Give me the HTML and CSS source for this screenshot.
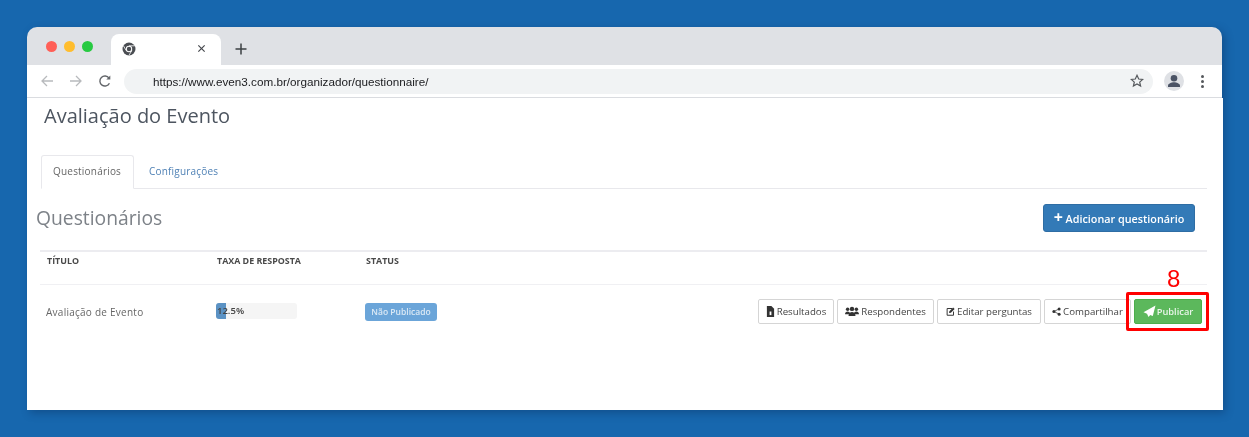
FILE: index.html
```html
<!DOCTYPE html>
<html lang="pt">
<head>
<meta charset="utf-8">
<title>Avaliação do Evento</title>
<link rel="stylesheet" href="styles.css">
</head>
<body>
<div class="window">
  <div class="tabstrip">
    <div class="lights"><span class="light red"></span><span class="light yellow"></span><span class="light green"></span></div>
    <div class="tab">
      <svg class="favicon" viewBox="0 0 14 14"><circle cx="7" cy="7" r="6.5" fill="#4a4d52"/><circle cx="7" cy="7" r="3.2" fill="#fff"/><circle cx="7" cy="7" r="2.2" fill="#4a4d52"/><path d="M7 3.8h5.6M4.2 8.6 1.6 4M9.8 8.6 7 13.2" stroke="#fff" stroke-width=".8" fill="none"/></svg>
      <svg class="close" viewBox="0 0 10 10"><path d="M1.5 1.5l7 7M8.5 1.5l-7 7" stroke="#45484d" stroke-width="1.3"/></svg>
    </div>
    <svg class="newtab" viewBox="0 0 12 12"><path d="M6 .5v11M.5 6h11" stroke="#3c4043" stroke-width="1.5"/></svg>
  </div>
  <div class="toolbar">
    <svg class="nav" viewBox="0 0 14 14"><path d="M13 7H2M7 2 2 7l5 5" stroke="#b8babd" stroke-width="1.3" fill="none"/></svg>
    <svg class="nav" viewBox="0 0 14 14"><path d="M1 7h11M7 2l5 5-5 5" stroke="#b8babd" stroke-width="1.3" fill="none"/></svg>
    <svg class="nav" viewBox="0 0 14 14"><path d="M11.4 9.2A5 5 0 1 1 11 4.2" stroke="#63666a" stroke-width="1.4" fill="none"/><path d="M12.3 1.6v4h-4z" fill="#63666a"/></svg>
    <div class="omnibox">
      <span class="url">https://www.even3.com.br/organizador/questionnaire/</span>
      <svg class="star" viewBox="0 0 14 14"><path d="M7 1.3 8.7 5l4 .4-3 2.7.9 4L7 10l-3.600 2.100.9-4-3-2.700 4-.4z" stroke="#55585c" stroke-width="1.200" fill="none"/></svg>
    </div>
    <div class="avatar"><svg viewBox="0 0 20 20"><circle cx="10" cy="7.200" r="3.300" fill="#4b5365"/><path d="M4 16v-1.500c0-2 3.500-3.300 6-3.300s6 1.300 6 3.300V16z" fill="#4b5365"/></svg></div>
    <div class="menu"><span></span><span></span><span></span></div>
  </div>
  <main class="page">
    <h1 class="title">Avaliação do Evento</h1>
    <nav class="tabs">
      <a class="navtab active">Questionários</a>
      <a class="navtab">Configurações</a>
    </nav>
    <div class="heading">
      <h2 class="subtitle">Questionários</h2>
      <button class="add"><span class="plus">+</span> Adicionar questionário</button>
    </div>
    <div class="table">
      <div class="thead">
        <span class="col-title">TÍTULO</span>
        <span class="col-rate">TAXA DE RESPOSTA</span>
        <span class="col-status">STATUS</span>
      </div>
      <div class="row">
        <span class="col-title name">Avaliação de Evento</span>
        <span class="col-rate"><span class="progress"><span class="bar"></span><span class="pct">12.5%</span></span></span>
        <span class="col-status"><span class="label">Não Publicado</span></span>
        <div class="actions">
          <button class="btn b1"><svg viewBox="0 0 10 12"><path d="M1 0h5l3 3v9H1z" fill="#333"/><path d="M4 6h2v4H4z" fill="#fff"/></svg>Resultados</button>
          <button class="btn b2"><svg class="wide" viewBox="0 0 16 12"><circle cx="8" cy="3" r="2.500" fill="#333"/><circle cx="3" cy="3.500" r="2" fill="#333"/><circle cx="13" cy="3.500" r="2" fill="#333"/><path d="M0 9c0-2 1.500-3 3-3s3 1 3 3zM10 9c0-2 1.500-3 3-3s3 1 3 3zM4 11c0-3 2-4.500 4-4.500s4 1.500 4 4.500z" fill="#333"/></svg>Respondentes</button>
          <button class="btn b3"><svg viewBox="0 0 12 12"><path d="M8 2H1.500v9h8.500V6" stroke="#333" stroke-width="1.300" fill="none"/><path d="M4.500 5.500 9.500.5l2 2-5 5-2.500.5z" fill="#333"/></svg>Editar perguntas</button>
          <button class="btn b4"><svg viewBox="0 0 12 12"><circle cx="2.500" cy="6" r="2" fill="#333"/><circle cx="9.500" cy="2.500" r="2" fill="#333"/><circle cx="9.500" cy="9.500" r="2" fill="#333"/><path d="M2.500 6l7-3.500M2.500 6l7 3.500" stroke="#333"/></svg>Compartilhar</button>
          <div class="callout">
            <button class="publish"><svg viewBox="0 0 12 12"><path d="M12 .5 0 7.200l3.500 1.600L5 12l1.700-2 2.600 1.100z" fill="#fff"/></svg>Publicar</button>
            <span class="marker"></span>
            <span class="number">8</span>
          </div>
        </div>
      </div>
    </div>
  </main>
</div>
</body>
</html>
```
FILE: styles.css
```css
* { box-sizing: border-box; }
html, body { margin: 0; height: 100%; }
body {
  background: #1767ae;
  padding: 27px 26px 27px 27px;
  font-family: "Open Sans", "Liberation Sans", sans-serif;
  overflow: hidden;
}
.window {
  width: 1195px;
  height: 383px;
  border-radius: 10px 10px 0 0;
  box-shadow: 3px 3px 8px rgba(10, 50, 100, .45);
}
.tabstrip {
  height: 38px;
  background: #dfe1e5;
  border-radius: 10px 10px 0 0;
  display: flex;
  align-items: flex-end;
  padding-left: 19px;
}
.lights { display: flex; gap: 7px; align-self: flex-start; margin-top: 14px; }
.light { width: 11px; height: 11px; border-radius: 50%; }
.red { background: #ff5f57; }
.yellow { background: #ffbd2e; }
.green { background: #28ca42; }
.tab {
  width: 110px;
  height: 31px;
  margin-left: 18px;
  background: #fff;
  border-radius: 8px 8px 0 0;
  display: flex;
  align-items: center;
  justify-content: space-between;
  padding: 0 15px 2px 11px;
}
.favicon { width: 14px; height: 14px; }
.close { width: 9px; height: 9px; }
.newtab { width: 12px; height: 12px; margin: 0 0 10px 14px; }
.toolbar {
  height: 33px;
  background: #fff;
  border-bottom: 1px solid #dadce0;
  display: flex;
  align-items: center;
  padding: 0 18px 0 13px;
}
.nav { width: 14px; height: 14px; margin-right: 15px; }
.omnibox {
  flex: 1;
  height: 25px;
  margin-left: -3px;
  background: #f1f3f4;
  border-radius: 13px;
  display: flex;
  align-items: center;
  justify-content: space-between;
  padding: 0 9px 0 29px;
}
.url { font: 11.7px "Liberation Sans", Arial, sans-serif; color: #202124; filter: blur(.3px); }
.star { width: 14px; height: 14px; }
.avatar {
  width: 20px;
  height: 20px;
  margin-left: 11px;
  border-radius: 50%;
  background: #dfe1e5;
}
.avatar svg { display: block; width: 20px; height: 20px; }
.menu { display: flex; flex-direction: column; gap: 2px; margin-left: 17px; }
.menu span { width: 3px; height: 3px; border-radius: 50%; background: #55585c; }
.page {
  width: 1196px;
  height: 312px;
  background: #fff;
  padding: 5px 16px 0 13px;
  color: #555;
}
.title {
  margin: 0 0 0 4px;
  height: 26px;
  font-size: 20px;
  line-height: 26px;
  font-weight: 400;
  color: #4d5560;
  filter: blur(.4px);
}
.tabs {
  display: flex;
  height: 34px;
  margin: 26px 0 0 1px;
  border-bottom: 1px solid #e8e8ec;
  filter: blur(.4px);
}
.navtab {
  height: 34px;
  padding: 0 15px;
  font-size: 10px;
  line-height: 32px;
  letter-spacing: .2px;
  color: #4f81b5;
}
.navtab.active {
  width: 93px;
  padding: 0 0 0 11px;
  color: #666;
  background: #fff;
  border: 1px solid #e8e8ec;
  border-bottom-color: #fff;
  border-radius: 3px 3px 0 0;
  line-height: 31px;
}
.heading {
  display: flex;
  align-items: center;
  justify-content: space-between;
  margin: 15px 12px 0 -4px;
  height: 28px;
  filter: blur(.4px);
}
.subtitle {
  margin: -2px 0 0;
  font-size: 19.3px;
  font-weight: 400;
  color: #7d8288;
}
.add {
  width: 152px;
  height: 28px;
  padding: 0;
  border: 1px solid #2e6da4;
  border-radius: 3px;
  background: #337ab7;
  color: #fff;
  font: 600 10.800px "Open Sans", sans-serif;
}
.plus { font-size: 16px; line-height: 10px; font-weight: 700; }
.table { margin-top: 18px; filter: blur(.4px); }
.thead {
  height: 35px;
  border-top: 2px solid #ececf0;
  border-bottom: 1px solid #f0f0f3;
  display: flex;
  align-items: center;
  padding: 0 0 16px 7px;
  font-size: 8.900px;
  font-weight: 700;
  color: #4a4a4a;
}
.col-title { width: 170px; flex: none; }
.col-rate { width: 149px; flex: none; display: flex; }
.col-status { width: 120px; flex: none; display: flex; }
.row {
  height: 48px;
  display: flex;
  align-items: center;
  padding: 4px 0 0 6px;
}
.name { font-size: 10px; color: #666; letter-spacing: .25px; margin-top: 2px; }
.progress {
  display: block;
  position: relative;
  width: 81px;
  height: 16px;
  background: #f5f5f5;
  border-radius: 3px;
  overflow: hidden;
}
.bar { display: block; width: 10px; height: 16px; background: #5b92c4; }
.pct { position: absolute; left: 1px; top: 0; font-size: 9.500px; font-weight: 600; line-height: 16px; color: #444; }
.label {
  display: block;
  width: 72px;
  height: 18px;
  margin-top: 2px;
  border-radius: 3px;
  background: #6ba5d9;
  color: #dbe9f5;
  font-size: 8.500px;
  font-weight: 600;
  line-height: 18px;
  text-align: center;
}
.actions {
  display: flex;
  align-items: center;
  margin-left: auto;
  margin-right: 5px;
  gap: 3px;
}
.btn {
  height: 25px;
  padding: 0;
  border: 1px solid #d5d5d5;
  border-radius: 2px;
  background: #fff;
  color: #444;
  font: 9.700px "Open Sans", sans-serif;
  display: flex;
  align-items: center;
  justify-content: center;
  gap: 2px;
}
.btn svg { width: 9px; height: 11px; }
.btn svg.wide { width: 14px; }
.b1 { width: 76px; }
.b2 { width: 97px; }
.b3 { width: 104px; }
.b4 { width: 87px; }
.callout { position: relative; }
.publish {
  width: 68px;
  height: 25px;
  padding: 0;
  border: 1px solid #4cae4c;
  border-radius: 2px;
  background: #5cb85c;
  color: #eaf6ea;
  font: 600 9.300px "Open Sans", sans-serif;
  display: flex;
  align-items: center;
  justify-content: center;
  gap: 1px;
}
.publish svg { width: 13px; height: 12px; }
.marker {
  position: absolute;
  left: -8px;
  top: -7px;
  width: 83px;
  height: 39px;
  border: 3px solid #f00;
  border-radius: 2px;
}
.number {
  position: absolute;
  left: 33px;
  top: -34px;
  font: 24px/28px "Liberation Sans", Arial, sans-serif;
  color: #f00;
}
```
